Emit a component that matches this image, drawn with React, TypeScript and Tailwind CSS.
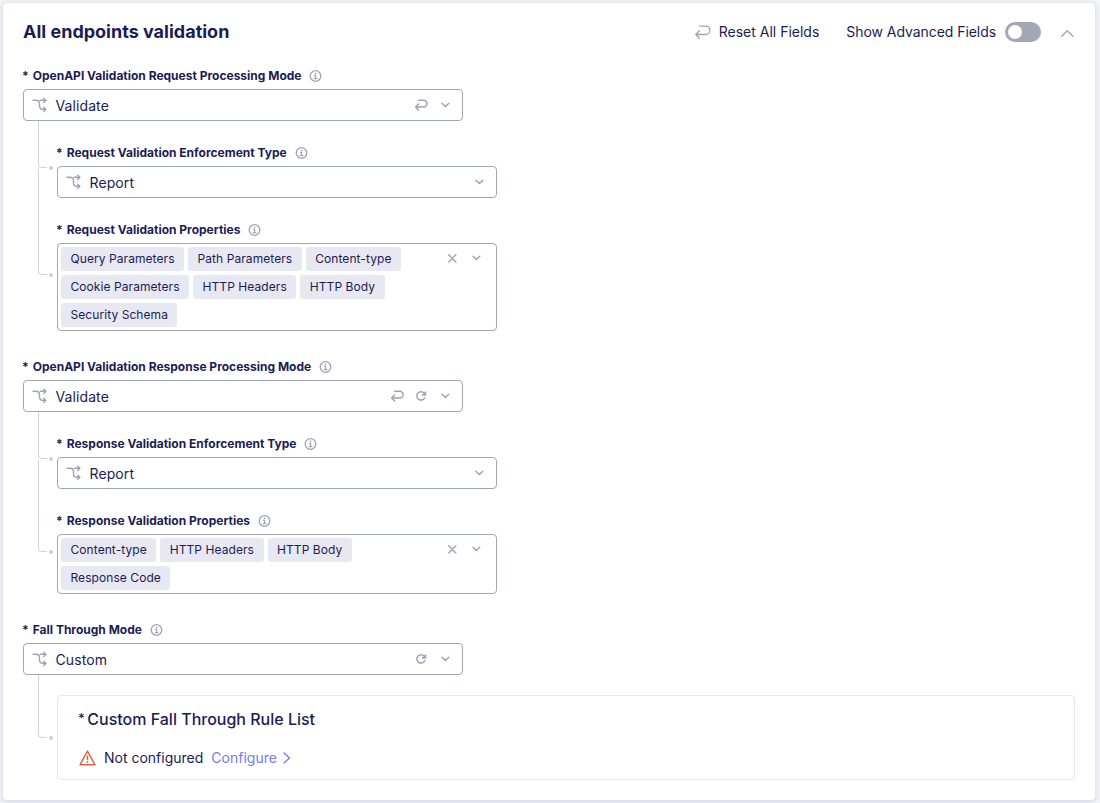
import type { ReactNode } from "react";

type IconProps = { className?: string };

function InfoIcon() {
  return (
    <svg className="h-3 w-[13px] text-[#9fa4b5]" viewBox="0 0 13 12" fill="none" stroke="currentColor">
      <circle cx="6.5" cy="6" r="5.3" strokeWidth="1.3" />
      <path d="M5.1 5.3h1.5v3.3M4.8 8.7h3.6" strokeWidth="1.2" />
      <circle cx="6.5" cy="3.3" r="0.85" fill="currentColor" stroke="none" />
    </svg>
  );
}

function BranchIcon() {
  return (
    <svg className="h-4 w-4 text-[#9fa4b5]" viewBox="0 0 16 16" fill="none" stroke="currentColor" strokeWidth="1.4" strokeLinecap="round" strokeLinejoin="round">
      <path d="M1 3.3h2.8c2.4 0 3.7 1.3 3.7 3.5v2c0 2.2 1 3.5 3 3.5h3.3M11.7 10.2l2.2 2.1-2.2 2.1" />
      <path d="M8.2 3.3h5.6M11.7 1.2l2.2 2.1-2.2 2.1" />
    </svg>
  );
}

function ReturnIcon({ className }: IconProps) {
  return (
    <svg className={className} viewBox="0 0 16 14" fill="none" stroke="currentColor" strokeLinecap="round" strokeLinejoin="round">
      <path d="M4.6 1.1h6.1a4.2 4.2 0 0 1 0 8.4H.8M4.4 5.8L.8 9.5l3.6 3.7" />
    </svg>
  );
}

function RefreshIcon() {
  return (
    <svg className="h-3 w-3" viewBox="0 0 12 12" fill="none" stroke="currentColor" strokeWidth="1.5">
      <path d="M9.2 3.1A4.2 4.2 0 1 0 10 7.2" />
      <path d="M10.5 1.4v3.5H7" />
      <path d="M10.5 1.4v3.5H7z" fill="currentColor" stroke="none" />
    </svg>
  );
}

function ChevronDown() {
  return (
    <svg className="h-3 w-3" viewBox="0 0 12 12" fill="none" stroke="currentColor" strokeWidth="1.5" strokeLinecap="round" strokeLinejoin="round">
      <path d="M3 4.2l3.4 3.3 3.4-3.3" />
    </svg>
  );
}

function CloseIcon() {
  return (
    <svg className="h-3 w-3" viewBox="0 0 12 12" fill="none" stroke="currentColor" strokeWidth="1.4" strokeLinecap="round">
      <path d="M2.7 2.7l7.2 7.2M9.9 2.7L2.7 9.9" />
    </svg>
  );
}

function Label({ children }: { children: ReactNode }) {
  return (
    <div className="-ml-px flex h-[26px] items-center text-[12px] font-bold whitespace-nowrap">
      <span className="mr-1">*</span>
      <span className="mr-2">{children}</span>
      <InfoIcon />
    </div>
  );
}

function Select({ value, back, refresh }: { value: string; back?: boolean; refresh?: boolean }) {
  return (
    <div className="flex h-8 w-[440px] items-center rounded-[4px] border border-[#a2a6b8] pr-[11px] pl-2">
      <BranchIcon />
      <span className="ml-[7.5px] flex-1 text-[14px] tracking-[0.1px]">{value}</span>
      <div className="flex items-center gap-3 text-[#9fa4b5]">
        {back && <ReturnIcon className="-mr-px h-3 w-[13px] stroke-[1.9]" />}
        {refresh && <RefreshIcon />}
        <ChevronDown />
      </div>
    </div>
  );
}

function TagSelect({ rows }: { rows: string[][] }) {
  return (
    <div className="flex w-[440px] items-start justify-between rounded-[4px] border border-[#a2a6b8] p-[3px]">
      <div className="flex flex-col gap-1">
        {rows.map((row) => (
          <div key={row[0]} className="flex gap-1">
            {row.map((tag) => (
              <span key={tag} className="flex h-6 items-center rounded-[3px] bg-[#e8e8f2] px-[9.5px] text-[12px] tracking-[0.07px] whitespace-nowrap">
                {tag}
              </span>
            ))}
          </div>
        ))}
      </div>
      <div className="mt-[5px] mr-[11px] flex gap-3 text-[#9fa4b5]">
        <CloseIcon />
        <ChevronDown />
      </div>
    </div>
  );
}

function Nested({ line, children }: { line: string; children: ReactNode }) {
  return (
    <div className="flex items-start">
      <div className="flex w-[34px] shrink-0 items-end pl-[15px]">
        <div className={`w-[9px] rounded-bl-[4px] border-b border-l border-[#d3d4e0] ${line}`} />
        <div className="-mb-[2px] ml-[2px] h-1 w-1 rounded-full bg-[#cdcfdd]" />
      </div>
      <div className="flex-1 pt-[19px]">{children}</div>
    </div>
  );
}

export default function App() {
  return (
    <div className="h-[803px] w-[1100px] overflow-hidden bg-[#f2f3f7] pt-[3px] pl-[3px] font-['Inter',sans-serif] text-[#1c1c53]">
      <div className="h-[797px] w-[1092px] rounded-[4px] bg-white px-5 shadow-[0_1px_4px_1px_#d9d9e6]">
        <header className="flex h-[60px] items-center pb-[2px]">
          <h1 className="mr-auto pb-px text-[18px] font-bold">All endpoints validation</h1>
          <button className="flex items-center gap-2 text-[14px]">
            <ReturnIcon className="h-[14px] w-4 stroke-[1.3] text-[#9fa4b5]" />
            <span className="pb-px">Reset All Fields</span>
          </button>
          <div className="ml-[27px] flex items-center gap-[9px] text-[14px]">
            <span className="pb-px tracking-[-0.06px]">Show Advanced Fields</span>
            <div className="flex h-5 w-9 items-center rounded-full bg-[#a2a6b5] pl-[3px]">
              <div className="h-[14px] w-[14px] rounded-full bg-white" />
            </div>
          </div>
          <svg className="mt-[3px] ml-5 h-[14px] w-[14px] text-[#9fa4b5]" viewBox="0 0 14 14" fill="none" stroke="currentColor" strokeWidth="1.4" strokeLinecap="round" strokeLinejoin="round">
            <path d="M.8 9.2L6.3 3.7l5.5 5.5" />
          </svg>
        </header>

        <section>
          <Label>OpenAPI Validation Request Processing Mode</Label>
          <Select value="Validate" back />
          <Nested line="h-[47px]">
            <Label>Request Validation Enforcement Type</Label>
            <Select value="Report" />
          </Nested>
          <Nested line="-mt-[29px] h-[106px]">
            <Label>Request Validation Properties</Label>
            <TagSelect
              rows={[
                ["Query Parameters", "Path Parameters", "Content-type"],
                ["Cookie Parameters", "HTTP Headers", "HTTP Body"],
                ["Security Schema"],
              ]}
            />
          </Nested>
        </section>

        <section className="mt-[23px]">
          <Label>OpenAPI Validation Response Processing Mode</Label>
          <Select value="Validate" back refresh />
          <Nested line="h-[47px]">
            <Label>Response Validation Enforcement Type</Label>
            <Select value="Report" />
          </Nested>
          <Nested line="-mt-[29px] h-[92px]">
            <Label>Response Validation Properties</Label>
            <TagSelect rows={[["Content-type", "HTTP Headers", "HTTP Body"], ["Response Code"]]} />
          </Nested>
        </section>

        <section className="mt-[23px]">
          <Label>Fall Through Mode</Label>
          <Select value="Custom" refresh />
          <Nested line="h-[63px]">
            <div className="mt-px h-[85px] rounded-[4px] border border-[#e6e6f2] px-[21px] pt-[11px]">
              <h2 className="-ml-px flex h-6 items-center gap-[2.5px] text-[16px] font-medium">
                <span className="text-[13px]">*</span>
                <span>Custom Fall Through Rule List</span>
              </h2>
              <div className="mt-[15px] flex h-6 items-center text-[14px]">
                <svg className="h-4 w-[17px] text-[#d9623b]" viewBox="0 0 17 16" fill="none" stroke="currentColor" strokeWidth="1.4" strokeLinejoin="round">
                  <path d="M8.5 1.2L16 14.8H1z" />
                  <path d="M8.5 5.5v4.7M8.5 11.3v1.7" strokeWidth="1.5" />
                </svg>
                <span className="ml-2 pb-px">Not configured</span>
                <a className="ml-2 flex items-center gap-[6px] text-[#7979f2]">
                  <span className="pb-px">Configure</span>
                  <svg className="h-3 w-2" viewBox="0 0 8 12" fill="none" stroke="currentColor" strokeWidth="1.4" strokeLinecap="round" strokeLinejoin="round">
                    <path d="M1 1l5.5 5L1 11" />
                  </svg>
                </a>
              </div>
            </div>
          </Nested>
        </section>
      </div>
    </div>
  );
}
